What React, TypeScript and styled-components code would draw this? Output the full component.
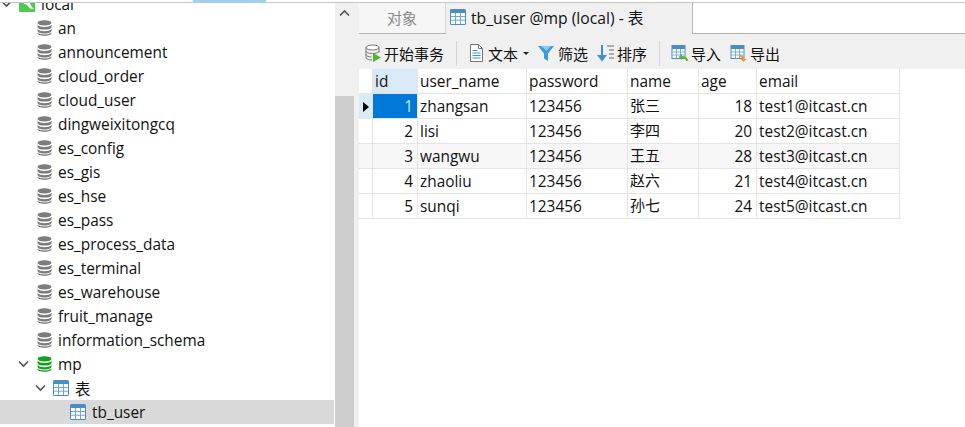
import React from "react";
import styled, { createGlobalStyle } from "styled-components";

const Global = createGlobalStyle`
  html, body { margin: 0; padding: 0; background: #fff; }
  body { font-family: "Open Sans", "Noto Sans CJK SC", sans-serif; font-size: 15.4px; color: #111; }
`;

const Frame = styled.div`
  width: 965px;
  height: 427px;
  overflow: hidden;
  display: flex;
  flex-direction: column;
`;
const TopStrip = styled.div`
  height: 2px;
  background: #fff;
  display: flex;
  padding-left: 193px;
`;
const TopAccent = styled.div`
  width: 73px;
  background: #99d1f7;
`;
const TopLine = styled.div`
  height: 1px;
  background: #c4c4c4;
`;
const Body = styled.div`
  flex: 1;
  min-height: 0;
  display: flex;
`;
const Sidebar = styled.div`
  width: 334px;
  display: flex;
  flex-direction: column;
  justify-content: flex-end;
  overflow: hidden;
  padding-bottom: 3px;
`;
const Row = styled.div<{ $depth: number; $selected?: boolean }>`
  flex: none;
  height: 24px;
  display: flex;
  align-items: center;
  padding-left: ${(p) => 1 + p.$depth * 17}px;
  background: ${(p) => (p.$selected ? "#d9d9d9" : "transparent")};
  white-space: nowrap;
`;
const ChevronSlot = styled.span`
  width: 18px;
  height: 24px;
  flex: none;
  display: flex;
  align-items: center;
`;
const IconSlot = styled.span`
  width: 16px;
  height: 24px;
  flex: none;
  display: flex;
  align-items: center;
  justify-content: center;
  margin-right: 6px;
`;
const Scroll = styled.div`
  width: 24px;
  margin-left: 1px;
  background: #f0f0f0;
  display: flex;
  flex-direction: column;
  padding-right: 5px;
  box-sizing: border-box;
`;
const ScrollUp = styled.div`
  height: 93px;
  padding-top: 6px;
  box-sizing: border-box;
  display: flex;
  justify-content: center;
  align-items: flex-start;
`;
const ScrollThumb = styled.div`
  flex: 1;
  background: #cdcdcd;
`;
const Main = styled.div`
  flex: 1;
  display: flex;
  flex-direction: column;
  min-width: 0;
`;
const Tabs = styled.div`
  height: 31px;
  display: flex;
`;
const Tab = styled.div<{ $active?: boolean }>`
  box-sizing: border-box;
  display: flex;
  align-items: center;
  white-space: nowrap;
  ${(p) =>
    p.$active
      ? `width: 247px; background:#f0f0f0; border-right:1px solid #b4b4b4; padding: 0 0 3px 4px; color:#111; font-size:15.7px;`
      : `width: 87px; justify-content:center; background:#f6f6f6; border-bottom:1px solid #b4b4b4; border-right:1px solid #d8d8d8; color:#8a8a8a; padding-bottom:2px; font-size:15px;`}
`;
const TabIcon = styled.span`
  display: flex;
  margin-right: 5px;
`;
const TabRest = styled.div`
  flex: 1;
  background: #fff;
  border-bottom: 1px solid #b4b4b4;
`;
const Toolbar = styled.div`
  height: 35px;
  box-sizing: border-box;
  background: #f0f0f0;
  display: flex;
  align-items: center;
  padding: 3px 0 0 6px;
  font-size: 15px;
  white-space: nowrap;
`;
const Tool = styled.div<{ $gap?: number; $after?: number }>`
  display: flex;
  align-items: center;
  gap: ${(p) => p.$gap ?? 3}px;
  margin-right: ${(p) => p.$after ?? 0}px;
`;
const Caret = styled.span`
  width: 0;
  height: 0;
  border-left: 3px solid transparent;
  border-right: 3px solid transparent;
  border-top: 3px solid #222;
  margin-left: 1px;
`;
const Separator = styled.div<{ $right?: number }>`
  width: 1px;
  height: 25px;
  background: #d4d4d4;
  margin: 0 ${(p) => p.$right ?? 12}px 0 12px;
`;
const Grid = styled.div`
  display: grid;
  width: 541px;
  grid-template-columns: 14px 45px 109px 101px 71px 58px 143px;
  grid-auto-rows: 25px;
`;
const Cell = styled.div<{
  $right?: boolean;
  $alt?: boolean;
  $cjk?: boolean;
  $tone?: "current" | "marker" | "selected";
}>`
  box-sizing: border-box;
  border-right: 1.5px solid #e4e4e4;
  border-bottom: 1.5px solid #e4e4e4;
  display: flex;
  align-items: center;
  padding: ${(p) => (p.$cjk ? "0" : "1px")} ${(p) => (p.$right ? 4 : 2)}px ${(p) => (p.$cjk ? "3px" : "0")} 2px;
  justify-content: ${(p) => (p.$right ? "flex-end" : "flex-start")};
  white-space: nowrap;
  overflow: hidden;
  font-size: ${(p) => (p.$cjk ? 15 : 15.4)}px;
  background: ${(p) =>
    p.$tone === "current"
      ? "#d8e9f8"
      : p.$tone === "marker"
      ? "#d9ebf9"
      : p.$tone === "selected"
      ? "#0078d7"
      : p.$alt
      ? "#f7f7f7"
      : "#fff"};
  color: ${(p) => (p.$tone === "selected" ? "#cfe6f8" : "#111")};
`;
const Marker = styled.span`
  width: 0;
  height: 0;
  border-top: 5.5px solid transparent;
  border-bottom: 5.5px solid transparent;
  border-left: 6px solid #000;
  margin-left: 2px;
`;

const Chevron = ({ up }: { up?: boolean }) => (
  <svg width="11" height="8" viewBox="0 0 11 8" fill="none">
    <path d={up ? "M1 6.5 5.5 2 10 6.5" : "M1 1.5 5.5 6 10 1.5"} stroke="#555" strokeWidth="1.7" />
  </svg>
);
const Db = ({ color }: { color: string }) => (
  <svg width="15" height="16" viewBox="0 0 15 16">
    <ellipse cx="7.5" cy="2.8" rx="7" ry="2.6" fill={color} />
    <path d="M.5 4.8c1 1.5 3.8 2.2 7 2.2s6-.7 7-2.2v2.1c0 1.5-3 2.7-7 2.7s-7-1.2-7-2.7z" fill={color} />
    <path d="M.5 9c1 1.5 3.8 2.2 7 2.2s6-.7 7-2.2v1.800c0 1.500-3 2.700-7 2.700s-7-1.200-7-2.700z" fill={color} />
    <path d="M.5 12.600c1 1.300 3.800 1.800 7 1.800s6-.5 7-1.800v.6c0 1.500-3 2.500-7 2.500s-7-1-7-2.500z" fill={color} />
  </svg>
);
const TableGlyph = ({ size = 16 }: { size?: number }) => (
  <svg width={size} height={size} viewBox="0 0 16 16">
    <rect x="0" y="0" width="16" height="16" rx="1.5" fill="#4a8cc4" />
    <rect x="1" y="4" width="14" height="11" fill="#fff" />
    <path d="M1 7.500h14M1 11.200h14M5.500 4v11M10.500 4v11" stroke="#6ea6d6" strokeWidth="1" />
  </svg>
);
const Local = () => (
  <svg width="16" height="16" viewBox="0 0 16 16">
    <rect width="16" height="16" fill="#4fcb4f" />
    <path d="M4 2 10 6 13 11 15 13 11 12.500 8 9 4 7z" fill="#fff" />
  </svg>
);
const TxIcon = () => (
  <svg width="17" height="18" viewBox="0 0 17 18" fill="none">
    <ellipse cx="7.500" cy="3.500" rx="6.500" ry="2.500" fill="#fff" stroke="#777" />
    <path d="M1 3.500v10c0 1.400 2.900 2.500 6 2.500M14 3.500v5M1 7c0 1.400 2.900 2.500 6.500 2.500S14 8.400 14 7M1 10.500c0 1.400 2.900 2.500 5.500 2.500" stroke="#777" />
    <path d="M8 9l8 4.500L8 18z" fill="#4cb82c" />
  </svg>
);
const DocIcon = () => (
  <svg width="15" height="18" viewBox="0 0 15 18" fill="none">
    <path d="M1.500.5h8l4 4v13h-12z" fill="#fff" stroke="#777" />
    <path d="M9.500.5v4h4" stroke="#777" />
    <path d="M3.500 6.500h5M3.500 9h8M3.500 11.500h8M3.500 14h8" stroke="#3a96dd" strokeWidth="1.200" />
  </svg>
);
const FilterIcon = () => (
  <svg width="16" height="16" viewBox="0 0 16 16">
    <path d="M0 1h16L10 8.500V16L6 13.500V8.500z" fill="#3d9ad8" />
    <path d="M3 1h10L8.500 6z" fill="#8cc7ee" />
  </svg>
);
const SortIcon = () => (
  <svg width="17" height="18" viewBox="0 0 17 18" fill="none">
    <path d="M5 1v12" stroke="#3d8fd4" strokeWidth="2" />
    <path d="M0 11h10l-5 6.500z" fill="#3d8fd4" />
    <path d="M10 2h7M12 6h5M12 10h5M12 14h5" stroke="#666" strokeWidth="1.200" />
  </svg>
);
const ImportExport = ({ out }: { out?: boolean }) => (
  <svg width="17" height="17" viewBox="0 0 17 17" fill="none">
    <rect x=".5" width="14" height="14" fill="#4a8cc4" />
    <rect x="1.500" y="4" width="12" height="9" fill="#fff" />
    <path d="M1.500 7h12M1.500 10h12M5.500 4v9M9.500 4v9" stroke="#7aaedb" />
    {out ? (
      <>
        <path d="M9 11c3 0 4.500.5 4.500 3" stroke="#f59a23" strokeWidth="2" />
        <path d="M10.500 14h6l-3 3z" fill="#f59a23" />
      </>
    ) : (
      <>
        <path d="M16 16c0-3-2-4-6-4" stroke="#5cb531" strokeWidth="2" />
        <path d="M11 9v6L7.500 12z" fill="#5cb531" />
      </>
    )}
  </svg>
);

const names = [
  "an",
  "announcement",
  "cloud_order",
  "cloud_user",
  "dingweixitongcq",
  "es_config",
  "es_gis",
  "es_hse",
  "es_pass",
  "es_process_data",
  "es_terminal",
  "es_warehouse",
  "fruit_manage",
  "information_schema",
];
const headers = ["id", "user_name", "password", "name", "age", "email"];
const users = [
  [1, "zhangsan", "123456", "张三", 18, "test1@itcast.cn"],
  [2, "lisi", "123456", "李四", 20, "test2@itcast.cn"],
  [3, "wangwu", "123456", "王五", 28, "test3@itcast.cn"],
  [4, "zhaoliu", "123456", "赵六", 21, "test4@itcast.cn"],
  [5, "sunqi", "123456", "孙七", 24, "test5@itcast.cn"],
];

export default function App() {
  return (
    <Frame>
      <Global />
      <TopStrip>
        <TopAccent />
      </TopStrip>
      <TopLine />
      <Body>
        <Sidebar>
          <Row $depth={0}>
            <ChevronSlot><Chevron /></ChevronSlot>
            <IconSlot><Local /></IconSlot>
            local
          </Row>
          {names.map((n) => (
            <Row $depth={1} key={n}>
              <ChevronSlot />
              <IconSlot><Db color="#7b7b7b" /></IconSlot>
              {n}
            </Row>
          ))}
          <Row $depth={1}>
            <ChevronSlot><Chevron /></ChevronSlot>
            <IconSlot><Db color="#14a01e" /></IconSlot>
            mp
          </Row>
          <Row $depth={2}>
            <ChevronSlot><Chevron /></ChevronSlot>
            <IconSlot><TableGlyph /></IconSlot>
            表
          </Row>
          <Row $depth={3} $selected>
            <ChevronSlot />
            <IconSlot><TableGlyph /></IconSlot>
            tb_user
          </Row>
        </Sidebar>
        <Scroll>
          <ScrollUp><Chevron up /></ScrollUp>
          <ScrollThumb />
        </Scroll>
        <Main>
          <Tabs>
            <Tab>对象</Tab>
            <Tab $active>
              <TabIcon><TableGlyph /></TabIcon>
              tb_user @mp (local) - 表
            </Tab>
            <TabRest />
          </Tabs>
          <Toolbar>
            <Tool $gap={2}><TxIcon />开始事务</Tool>
            <Separator />
            <Tool $gap={4} $after={9}><DocIcon />文本<Caret /></Tool>
            <Tool $gap={4} $after={9}><FilterIcon />筛选</Tool>
            <Tool $gap={3}><SortIcon />排序</Tool>
            <Separator $right={11} />
            <Tool $gap={3} $after={9}><ImportExport />导入</Tool>
            <Tool $gap={3}><ImportExport out />导出</Tool>
          </Toolbar>
          <Grid>
            <Cell />
            {headers.map((h, i) => (
              <Cell key={h} $tone={i === 0 ? "current" : undefined}>{h}</Cell>
            ))}
            {users.map((u, r) => (
              <React.Fragment key={r}>
                <Cell $tone={r === 0 ? "marker" : undefined} $alt={r === 2}>
                  {r === 0 && <Marker />}
                </Cell>
                {u.map((v, c) => (
                  <Cell
                    key={c}
                    $right={typeof v === "number"}
                    $cjk={c === 3}
                    $alt={r === 2}
                    $tone={r === 0 && c === 0 ? "selected" : undefined}
                  >
                    {v}
                  </Cell>
                ))}
              </React.Fragment>
            ))}
          </Grid>
        </Main>
      </Body>
    </Frame>
  );
}
